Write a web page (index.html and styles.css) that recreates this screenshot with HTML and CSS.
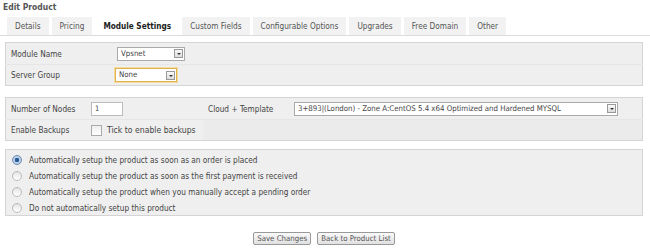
FILE: index.html
```html
<!DOCTYPE html>
<html lang="en">
  <head>
    <meta charset="utf-8">
    <title>Edit Product</title>
    <link rel="stylesheet" href="styles.css">
  </head>
  <body>
    <h1>Edit Product</h1>
    <ul class="tabs">
      <li>Details</li>
      <li>Pricing</li>
      <li class="active">Module Settings</li>
      <li>Custom Fields</li>
      <li>Configurable Options</li>
      <li>Upgrades</li>
      <li>Free Domain</li>
      <li>Other</li>
    </ul>
    <div class="panel">
      <table class="form first">
        <tr>
          <td class="label">Module Name</td>
          <td><span class="select sel-module">Vpsnet<i></i></span></td>
        </tr>
        <tr>
          <td class="label">Server Group</td>
          <td><span class="select sel-group focus">None<i></i></span></td>
        </tr>
      </table>

      <table class="form second">
        <tr>
          <td class="label">Number of Nodes</td>
          <td class="field"><span class="text">1</span></td>
          <td class="label2">Cloud + Template</td>
          <td><span class="select sel-cloud">3+893|(London) - Zone A:CentOS 5.4 x64 Optimized and Hardened MYSQL<i></i></span></td>
        </tr>
        <tr>
          <td class="label">Enable Backups</td>
          <td class="field"><label class="check"><span class="box"></span>Tick to enable backups</label></td>
          <td colspan="2" class="blank"></td>
        </tr>
      </table>

      <div class="radios">
        <label><span class="radio on"></span>Automatically setup the product as soon as an order is placed</label>
        <label><span class="radio"></span>Automatically setup the product as soon as the first payment is received</label>
        <label><span class="radio"></span>Automatically setup the product when you manually accept a pending order</label>
        <label><span class="radio"></span>Do not automatically setup this product</label>
      </div>
    </div>
    <div class="actions">
      <button>Save Changes</button>
      <button>Back to Product List</button>
    </div>
  </body>
</html>
```
FILE: styles.css
```css
body {
  margin: 0;
  font-family: "DejaVu Sans Condensed", "DejaVu Sans", sans-serif;
  font-size: 8.2px;
  color: #444;
  background: #fff;
}

h1 {
  font-size: 8.5px;
  font-weight: bold;
  margin: 0;
  padding: 2px 0 0 3px;
  height: 15px;
  color: #555;
}

.tabs {
  list-style: none;
  margin: 0;
  padding: 0 0 0 7px;
  display: flex;
  gap: 3px;
  height: 18px;
}

.tabs li {
  background: #f2f2f2;
  padding: 0 8px;
  line-height: 18px;
  color: #555;
}

.tabs li.active {
  background: #fff;
  font-weight: bold;
  color: #222;
}

.panel {
  border-top: 1px solid #ddd;
  padding: 6px 7px 0 5px;
}

table.form {
  width: 100%;
  border-collapse: collapse;
  background: #efefef;
  border: 1px solid #d4d4d4;
  line-height: 10px;
}

table.first {
  margin-bottom: 11px;
}

table.second {
  margin-bottom: 8px;
}

table.form td {
  height: 21px;
  padding: 0 5px;
  border-bottom: 1px solid #e6e6e6;
  vertical-align: middle;
  white-space: nowrap;
}

table.form tr:last-child td {
  height: 20px;
  border-bottom: none;
}

td.label {
  width: 70px;
}

td.label2 {
  width: 76px;
}

td.field {
  width: 107px;
}

td.blank {
  background: #ebebeb;
}

.select {
  display: inline-flex;
  vertical-align: middle;
  align-items: center;
  justify-content: space-between;
  height: 14px;
  border: 1px solid #aaa;
  background: #fff;
  padding: 0 1px 0 3px;
  font-size: 7.8px;
  color: #444;
  box-sizing: border-box;
}

.select i {
  width: 9px;
  height: 9px;
  border: 1px solid #999;
  background: linear-gradient(#fafafa, #ddd);
  position: relative;
  box-sizing: border-box;
}

.select i::after {
  content: "";
  position: absolute;
  left: 2px;
  top: 3px;
  border-left: 2px solid transparent;
  border-right: 2px solid transparent;
  border-top: 2px solid #333;
}

.sel-module {
  width: 68px;
  margin-left: 26px;
}

.sel-group {
  width: 62px;
  margin-left: 24px;
}

.select.focus {
  border-color: #e0b24a;
  box-shadow: 0 0 0 1px #f4dca0;
}

.sel-cloud {
  width: 324px;
}

.text {
  display: inline-block;
  vertical-align: middle;
  width: 32px;
  height: 14px;
  line-height: 12px;
  border: 1px solid #bbb;
  background: #fff;
  padding-left: 3px;
  box-sizing: border-box;
  font-size: 7.5px;
}

.check {
  display: flex;
  align-items: center;
  gap: 5px;
  font-size: 8.6px;
}

.box {
  width: 9px;
  height: 9px;
  border: 1px solid #aaa;
  background: linear-gradient(#eee, #fff);
}

.radios {
  background: #efefef;
  border: 1px solid #d4d4d4;
  padding: 2px 0 0 6px;
  height: 63px;
}

.radios label {
  display: flex;
  align-items: center;
  gap: 7px;
  height: 16px;
}

.radio {
  width: 8px;
  height: 8px;
  border-radius: 50%;
  border: 1px solid #bbb;
  background: linear-gradient(#e4e4e4, #fff);
}

.radio.on {
  background: radial-gradient(circle, #2a5a9a 0 2px, #bcd0e8 2.5px);
  border-color: #6a8cb8;
}

.actions {
  display: flex;
  justify-content: center;
  gap: 6px;
  padding-top: 16px;
  padding-right: 2px;
}

button {
  font-family: inherit;
  font-size: 7.8px;
  color: #555;
  height: 13px;
  line-height: 11px;
  padding: 0 3px;
  border: 1px solid #999;
  border-radius: 2px;
  background: linear-gradient(#fafafa, #e0e0e0);
}
```
